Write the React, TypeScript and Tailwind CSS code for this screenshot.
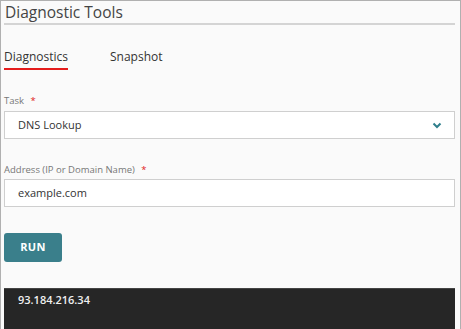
import React, { useState } from "react";

const font = { fontFamily: '"Open Sans", "Liberation Sans", sans-serif' };

const Label: React.FC<{ text: string }> = ({ text }) => (
  <div className="text-[9.5px] leading-[16px] text-[#777]">
    {text} <span className="ml-1 text-[#e02020]">*</span>
  </div>
);

export default function App() {
  const [tab, setTab] = useState("Diagnostics");
  const tabs = ["Diagnostics", "Snapshot"];

  return (
    <div
      style={font}
      className="w-[461px] h-[329px] overflow-hidden bg-[#fafafa] border-l border-t border-r border-[#b0b0b0] pl-[3px] pr-[5px] flex flex-col"
    >
      {/* Header */}
      <div className="pt-[1px] border-b-2 border-[#d4d4d4]">
        <h1 className="text-[15.5px] leading-[21px] text-[#444] ml-[1px]">Diagnostic Tools</h1>
      </div>

      {/* Tabs */}
      <div className="flex gap-[42px] mt-[23px]">
        {tabs.map((t) => (
          <button
            key={t}
            onClick={() => setTab(t)}
            className={`text-[12px] leading-[18px] text-[#333] pb-[2px] border-b-2 ${
              tab === t ? "border-[#e41c1c]" : "border-transparent"
            }`}
          >
            {t}
          </button>
        ))}
      </div>

      {/* Task */}
      <div className="mt-[23px]">
        <Label text="Task" />
        <div className="mt-[2px] h-[28px] bg-white border border-[#cfcfcf] flex items-center justify-between pl-[13px] pr-[12px]">
          <span className="text-[11px] text-[#333]">DNS Lookup</span>
          <svg width="10" height="7" viewBox="0 0 10 7" fill="none">
            <path d="M1.5 1.5L5 5L8.5 1.5" stroke="#2f7f8c" strokeWidth="2" />
          </svg>
        </div>
      </div>

      {/* Address */}
      <div className="mt-[23px]">
        <Label text="Address (IP or Domain Name)" />
        <div className="mt-[1px] h-[28px] bg-white border border-[#cfcfcf] flex items-center pl-[13px]">
          <span className="text-[11px] text-[#333]">example.com</span>
        </div>
      </div>

      {/* Run */}
      <div className="mt-[26px]">
        <button className="w-[58px] h-[29px] rounded-[3px] bg-[#3a7f8b] text-white text-[11px] font-bold tracking-[0.3px]">
          RUN
        </button>
      </div>

      {/* Output */}
      <div className="mt-[26px] flex-1 bg-[#262626] border-t border-[#444] pl-[14px] pt-[3px]">
        <div className="text-[11px] leading-[16px] font-semibold text-[#f0f0f0]">93.184.216.34</div>
      </div>
    </div>
  );
}
